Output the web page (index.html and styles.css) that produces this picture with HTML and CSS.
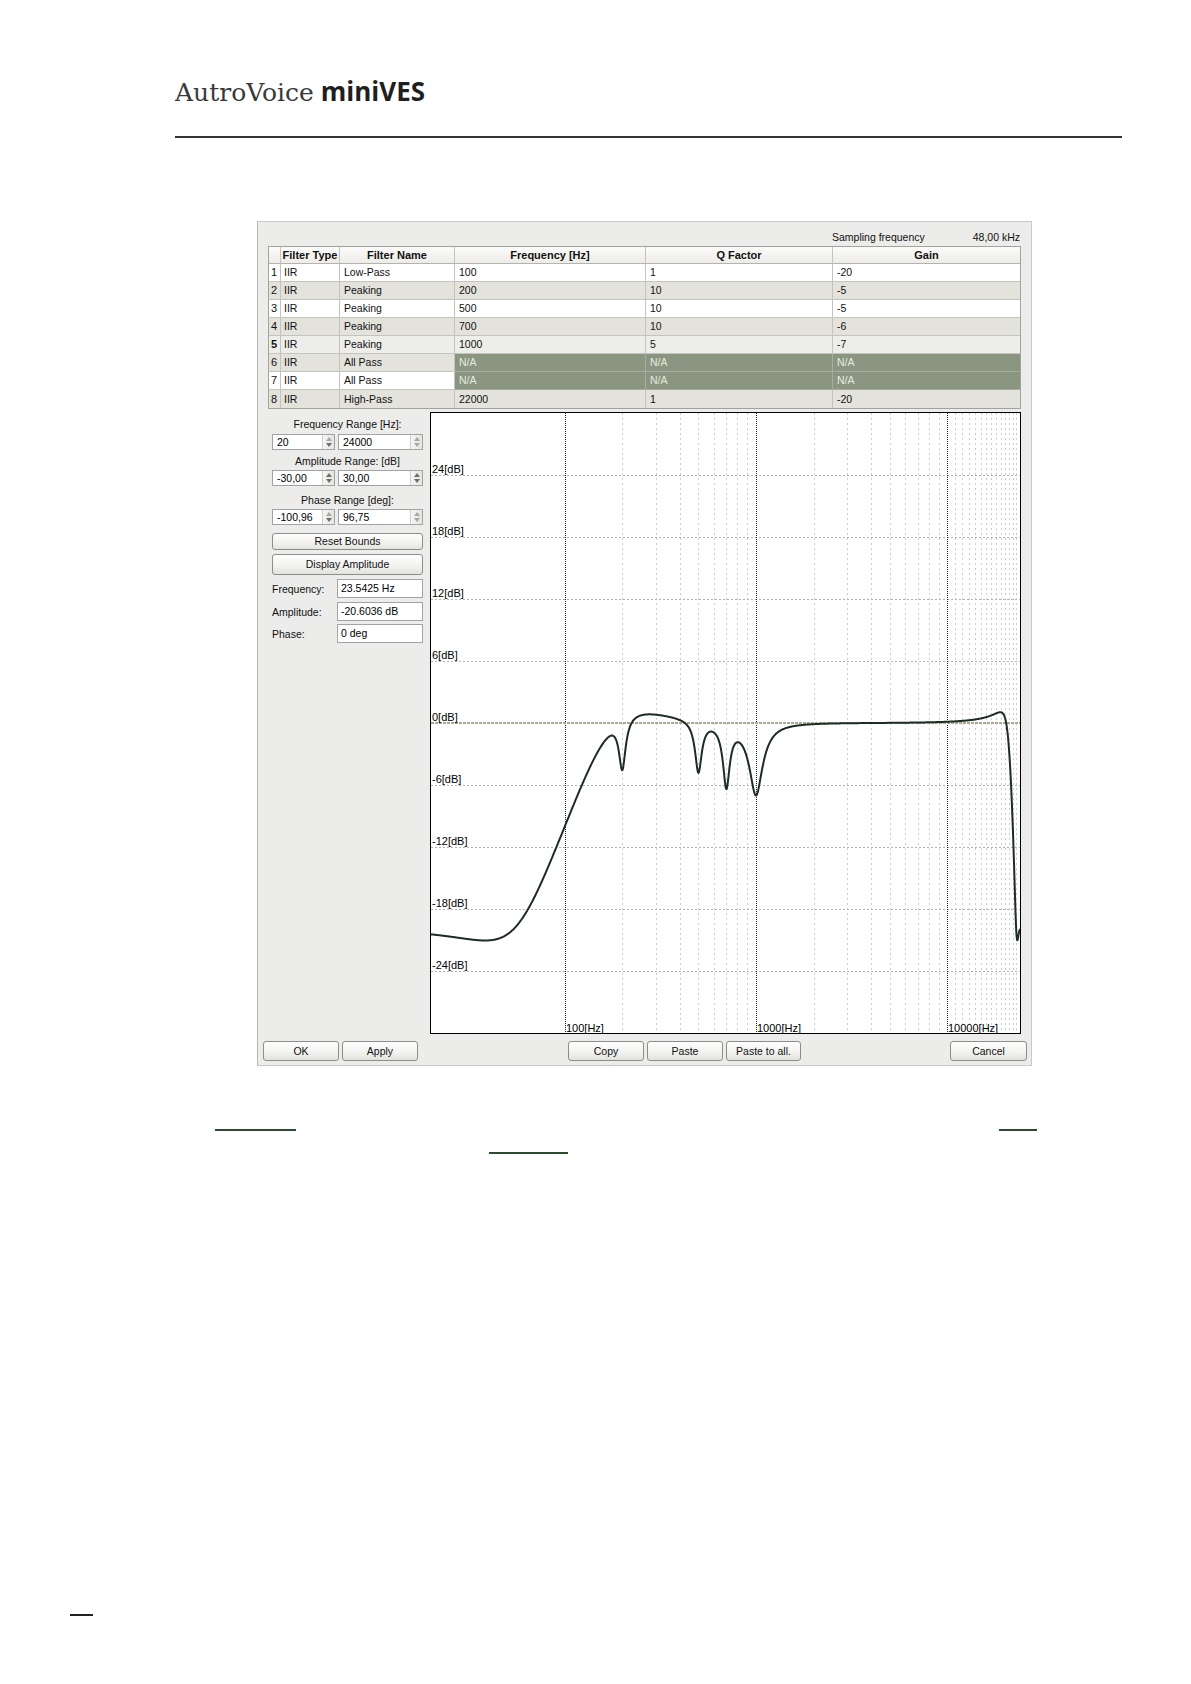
FILE: index.html
```html
<!DOCTYPE html>
<html lang="en">
<head>
<meta charset="utf-8">
<title>AutroVoice miniVES</title>
<link rel="stylesheet" href="styles.css">
</head>
<body>
<div class="page">
  <header class="doc-header">
    <h1 class="title"><span class="brand">AutroVoice</span> <span class="product">miniVES</span></h1>
    <div class="rule"></div>
  </header>

  <div class="dialog">
    <div class="topbar">
      <span class="sf-label">Sampling frequency</span>
      <span class="sf-value">48,00 kHz</span>
    </div>

    <div class="tbl">
      <div class="c h n"></div><div class="c h">Filter Type</div><div class="c h">Filter Name</div><div class="c h">Frequency [Hz]</div><div class="c h">Q Factor</div><div class="c h">Gain</div>

      <div class="c n rw">1</div><div class="c t rw">IIR</div><div class="c rw">Low-Pass</div><div class="c rw">100</div><div class="c rw">1</div><div class="c rw">-20</div>
      <div class="c n rg">2</div><div class="c t rg">IIR</div><div class="c rg">Peaking</div><div class="c rg">200</div><div class="c rg">10</div><div class="c rg">-5</div>
      <div class="c n rw">3</div><div class="c t rw">IIR</div><div class="c rw">Peaking</div><div class="c rw">500</div><div class="c rw">10</div><div class="c rw">-5</div>
      <div class="c n rg">4</div><div class="c t rg">IIR</div><div class="c rg">Peaking</div><div class="c rg">700</div><div class="c rg">10</div><div class="c rg">-6</div>
      <div class="c n rl bold">5</div><div class="c t rl">IIR</div><div class="c rl">Peaking</div><div class="c rl">1000</div><div class="c rl">5</div><div class="c rl">-7</div>
      <div class="c n rg">6</div><div class="c t rg">IIR</div><div class="c rg">All Pass</div><div class="c na">N/A</div><div class="c na">N/A</div><div class="c na">N/A</div>
      <div class="c n rw">7</div><div class="c t rw">IIR</div><div class="c rw">All Pass</div><div class="c na">N/A</div><div class="c na">N/A</div><div class="c na">N/A</div>
      <div class="c n rg">8</div><div class="c t rg">IIR</div><div class="c rg">High-Pass</div><div class="c rg">22000</div><div class="c rg">1</div><div class="c rg">-20</div>
    </div>

    <div class="main">
      <div class="side">
        <div class="cap cap1">Frequency Range [Hz]:</div>
        <div class="spins sp1">
          <div class="spin s1"><span class="v">20</span><span class="arr"><i class="up light"></i><i class="dn"></i></span></div>
          <div class="spin s2"><span class="v">24000</span><span class="arr"><i class="up light"></i><i class="dn light"></i></span></div>
        </div>
        <div class="cap cap2">Amplitude Range: [dB]</div>
        <div class="spins">
          <div class="spin s1"><span class="v">-30,00</span><span class="arr"><i class="up"></i><i class="dn"></i></span></div>
          <div class="spin s2"><span class="v">30,00</span><span class="arr"><i class="up"></i><i class="dn"></i></span></div>
        </div>
        <div class="cap cap3">Phase Range [deg]:</div>
        <div class="spins">
          <div class="spin s1"><span class="v">-100,96</span><span class="arr"><i class="up light"></i><i class="dn"></i></span></div>
          <div class="spin s2"><span class="v">96,75</span><span class="arr"><i class="up light"></i><i class="dn light"></i></span></div>
        </div>
        <div class="btn reset">Reset Bounds</div>
        <div class="btn disp">Display Amplitude</div>
        <div class="frow fr1"><span class="flabel">Frequency:</span><span class="field">23.5425 Hz</span></div>
        <div class="frow fr2"><span class="flabel">Amplitude:</span><span class="field">-20.6036 dB</span></div>
        <div class="frow fr3"><span class="flabel">Phase:</span><span class="field">0 deg</span></div>
      </div>

      <div class="plot">
        <svg id="plotsvg" width="589" height="620" viewBox="0 0 589 620" xmlns="http://www.w3.org/2000/svg">
          <g id="grid"></g>
          <g class="lbl">
            <text x="1" y="60">24[dB]</text>
            <text x="1" y="122">18[dB]</text>
            <text x="1" y="184">12[dB]</text>
            <text x="1" y="246">6[dB]</text>
            <text x="1" y="308">0[dB]</text>
            <text x="1" y="370">-6[dB]</text>
            <text x="1" y="432">-12[dB]</text>
            <text x="1" y="494">-18[dB]</text>
            <text x="1" y="556">-24[dB]</text>
            <text x="135" y="619">100[Hz]</text>
            <text x="326" y="619">1000[Hz]</text>
            <text x="517" y="619">10000[Hz]</text>
          </g>
          <path id="curve" class="curve" d=""></path>
        </svg>
      </div>
    </div>

    <div class="buttons">
      <div class="btn b-ok">OK</div>
      <div class="btn b-apply">Apply</div>
      <div class="btn b-copy">Copy</div>
      <div class="btn b-paste">Paste</div>
      <div class="btn b-pall">Paste to all.</div>
      <div class="btn b-cancel">Cancel</div>
    </div>
  </div>

  <div class="notes">
    <div class="note-row nr1"><span class="link l1"></span><span class="link l2"></span></div>
    <div class="note-row nr2"><span class="link l3"></span></div>
  </div>

  <div class="footer"><span class="footline"></span></div>
</div>
<script src="script.js"></script>
</body>
</html>
```

FILE: styles.css
```css
* { box-sizing: border-box; }
html, body { margin: 0; padding: 0; background: #ffffff; }
body {
  width: 1191px;
  height: 1684px;
  overflow: hidden;
  font-family: "Liberation Sans", Arial, sans-serif;
  color: #000;
}
.page { padding-left: 175px; padding-right: 69px; }

/* document header */
.doc-header { padding-top: 76px; }
.title {
  margin: 0;
  height: 36px;
  font-weight: normal;
  font-size: 25px;
  line-height: 30px;
  color: #3a3a3a;
  white-space: nowrap;
}
.brand { font-family: "DejaVu Serif", serif; font-weight: normal; }
.product { font-family: "Open Sans", sans-serif; font-weight: 700; font-size: 26px; color: #1f1f1f; }
.rule { margin-top: 24px; height: 2px; background: #333; }

/* dialog */
.dialog {
  margin-top: 83px;
  margin-left: 82px;
  width: 775px;
  height: 845px;
  background: #ececea;
  border: 1px solid #c9c9c6;
  border-left-color: #b5b5b2;
  padding: 0 10px 3px 10px;
  font-size: 10.5px;
}
.topbar {
  height: 24px;
  display: flex;
  align-items: flex-end;
  padding-left: 564px;
  padding-right: 1px;
  padding-bottom: 2px;
  line-height: 13px;
  color: #111;
}
.sf-value { margin-left: auto; }

/* filter table */
.tbl {
  display: grid;
  grid-template-columns: 12px 59px 115px 191px 187px 187px;
  border: 1px solid #a3a39e;
  background: #fff;
}
.c {
  height: 18px;
  line-height: 17px;
  padding-left: 4px;
  border-right: 1px solid #c4c4bf;
  border-bottom: 1px solid #c4c4bf;
  white-space: nowrap;
  overflow: hidden;
  color: #111;
}
.c:nth-child(6n) { border-right: none; }
.c.h {
  height: 17px;
  line-height: 16px;
  padding-left: 0;
  text-align: center;
  font-weight: bold;
  font-size: 11px;
  background: linear-gradient(#fbfbfa, #edece8);
  border-bottom-color: #b4b4ae;
}
.c.n { padding-left: 2px; font-size: 11px; }
.c.t { padding-left: 3px; }
.c:nth-last-child(-n+6) { border-bottom: none; height: 18px; line-height: 18px; }
.bold { font-weight: bold; }
.rw { background: #ffffff; }
.rg { background: #e3e3dc; }
.rl { background: #ededea; }
.na {
  background: #8b9682;
  color: #e4eadf;
  border-right-color: #a5ae9c;
  border-bottom-color: #a5ae9c;
}

/* main area */
.main { display: flex; margin-top: 3px; }
.side {
  width: 162px;
  padding: 0 7px 0 4px;
  display: flex;
  flex-direction: column;
}
.cap { height: 15px; line-height: 15px; text-align: center; color: #111; }
.cap1 { margin-top: 5px; }
.cap2 { margin-top: 4px; }
.cap3 { margin-top: 7px; }
.spins { display: flex; gap: 3px; margin-top: 1px; }
.spins.sp1 { margin-top: 2px; }
.spin {
  height: 16px;
  display: flex;
  background: #fff;
  border: 1px solid #a3a3a3;
}
.s1 { width: 63px; }
.s2 { width: 85px; }
.spin .v { flex: 1; padding-left: 4px; line-height: 14px; }
.spin .arr {
  width: 12px;
  display: flex;
  flex-direction: column;
  align-items: center;
  justify-content: center;
  gap: 2px;
  background: linear-gradient(90deg, #f6f6f4, #e4e4e0);
  border-left: 1px solid #d0d0cc;
}
.arr i { display: block; width: 0; height: 0; border-left: 3px solid transparent; border-right: 3px solid transparent; }
.arr .up { border-bottom: 4px solid #6d6d6d; }
.arr .dn { border-top: 4px solid #6d6d6d; }
.arr .up.light { border-bottom-color: #a8a8a8; }
.arr .dn.light { border-top-color: #a8a8a8; }

.btn {
  border: 1px solid #8d8d8a;
  border-radius: 3px;
  background: linear-gradient(#fefefe, #f3f3f1 55%, #e2e2de);
  text-align: center;
  color: #111;
  white-space: nowrap;
}
.reset { margin-top: 8px; height: 17px; line-height: 15px; }
.disp { margin-top: 4px; height: 21px; line-height: 19px; }

.frow { display: flex; align-items: center; height: 19px; }
.fr1 { margin-top: 4px; }
.fr2 { margin-top: 4px; }
.fr3 { margin-top: 3px; }
.flabel { width: 65px; color: #111; }
.field {
  width: 86px;
  height: 19px;
  line-height: 17px;
  padding-left: 3px;
  background: #fff;
  border: 1px solid #a3a3a3;
}

/* plot */
.plot {
  width: 591px;
  height: 622px;
  border: 1px solid #000;
  background: #fff;
}
.plot svg { display: block; }
.lbl text { font-family: "Liberation Sans", Arial, sans-serif; font-size: 11px; fill: #000; }
.gmin { stroke: #cdcdcd; stroke-width: 1; stroke-dasharray: 2 3; }
.gh { stroke: #b2b2b2; stroke-width: 1; stroke-dasharray: 2 2; }
.gmaj { stroke: #222; stroke-width: 1; stroke-dasharray: 1 1; }
.g0 { stroke: #a9a892; stroke-width: 2; stroke-dasharray: 3 1; }
.curve { fill: none; stroke: #1d2c24; stroke-width: 2; stroke-linejoin: round; stroke-linecap: round; }

/* dialog buttons */
.buttons { display: flex; margin: 7px -6px 0 -5px; height: 20px; }
.buttons .btn { height: 20px; line-height: 18px; width: 76px; }
.b-apply { margin-left: 3px; }
.b-copy { margin-left: 150px; }
.b-paste { margin-left: 3px; }
.buttons .b-pall { margin-left: 3px; width: 75px; }
.buttons .b-cancel { margin-left: auto; width: 77px; }

/* notes (link underlines) */
.notes { margin-top: 63px; }
.note-row { display: flex; height: 2px; }
.link { display: block; height: 2px; background: #2f4b2f; }
.l1 { margin-left: 40px; width: 81px; }
.l2 { margin-left: 703px; width: 38px; }
.nr2 { margin-top: 21px; }
.l3 { margin-left: 314px; width: 79px; }

.footer { margin-top: 460px; margin-left: -105px; height: 2px; }
.footline { display: block; width: 23px; height: 2px; background: #222; }
```

FILE: script.js
```js
(function () {
  var W = 589, H = 620, FS = 48000;
  var L0 = Math.log10(20), L1 = Math.log10(24000);
  function X(f) { return (Math.log10(f) - L0) / (L1 - L0) * W; }
  function Y(db) { return (30 - db) / 60 * H; }
  var NS = 'http://www.w3.org/2000/svg';
  var grid = document.getElementById('grid');
  function line(x1, y1, x2, y2, cls) {
    var l = document.createElementNS(NS, 'line');
    l.setAttribute('x1', x1); l.setAttribute('y1', y1);
    l.setAttribute('x2', x2); l.setAttribute('y2', y2);
    l.setAttribute('class', cls);
    grid.appendChild(l);
  }
  var minors = [], f;
  for (f = 200; f < 1000; f += 100) minors.push(f);
  for (f = 2000; f < 10000; f += 1000) minors.push(f);
  for (f = 11000; f < 24000; f += 1000) minors.push(f);
  minors.forEach(function (fr) { var x = Math.round(X(fr)) + 0.5; line(x, 0, x, H, 'gmin'); });
  [24, 18, 12, 6, -6, -12, -18, -24].forEach(function (d) { var y = Math.round(Y(d)) + 0.5; line(0, y, W, y, 'gh'); });
  [100, 1000, 10000].forEach(function (fr) { var x = Math.round(X(fr)) + 0.5; line(x, 0, x, H, 'gmaj'); });
  line(0, Math.round(Y(0)), W, Math.round(Y(0)), 'g0');

  function coeffs(type, f0, Q, g) {
    var A = Math.pow(10, g / 40), w0 = 2 * Math.PI * f0 / FS;
    var cw = Math.cos(w0), al = Math.sin(w0) / (2 * Q), sA = Math.sqrt(A);
    if (type === 'peak') {
      return [1 + al * A, -2 * cw, 1 - al * A, 1 + al / A, -2 * cw, 1 - al / A];
    }
    if (type === 'low') {
      return [A * ((A + 1) - (A - 1) * cw + 2 * sA * al), 2 * A * ((A - 1) - (A + 1) * cw), A * ((A + 1) - (A - 1) * cw - 2 * sA * al),
              (A + 1) + (A - 1) * cw + 2 * sA * al, -2 * ((A - 1) + (A + 1) * cw), (A + 1) + (A - 1) * cw - 2 * sA * al];
    }
    return [A * ((A + 1) + (A - 1) * cw + 2 * sA * al), -2 * A * ((A - 1) + (A + 1) * cw), A * ((A + 1) + (A - 1) * cw - 2 * sA * al),
            (A + 1) - (A - 1) * cw + 2 * sA * al, 2 * ((A - 1) - (A + 1) * cw), (A + 1) - (A - 1) * cw - 2 * sA * al];
  }
  var filters = [
    coeffs('low', 100, 1, -20),
    coeffs('peak', 200, 10, -5),
    coeffs('peak', 500, 10, -5),
    coeffs('peak', 700, 10, -6),
    coeffs('peak', 1000, 5, -7),
    coeffs('high', 22000, 1, -20)
  ];
  function mag2(c, w) {
    var cw = Math.cos(w), sw = Math.sin(w), c2 = Math.cos(2 * w), s2 = Math.sin(2 * w);
    var nr = c[0] + c[1] * cw + c[2] * c2, ni = -(c[1] * sw + c[2] * s2);
    var dr = c[3] + c[4] * cw + c[5] * c2, di = -(c[4] * sw + c[5] * s2);
    return (nr * nr + ni * ni) / (dr * dr + di * di);
  }
  var d = '';
  for (var x = 0; x <= W; x += 0.5) {
    var fr = Math.pow(10, L0 + x / W * (L1 - L0));
    var w = 2 * Math.PI * fr / FS, p = 1;
    for (var i = 0; i < filters.length; i++) p *= mag2(filters[i], w);
    var db = 10 * Math.log10(p);
    var y = Math.max(0, Math.min(H, Y(db)));
    d += (x === 0 ? 'M' : 'L') + x.toFixed(1) + ' ' + y.toFixed(2);
  }
  document.getElementById('curve').setAttribute('d', d);
})();
```
